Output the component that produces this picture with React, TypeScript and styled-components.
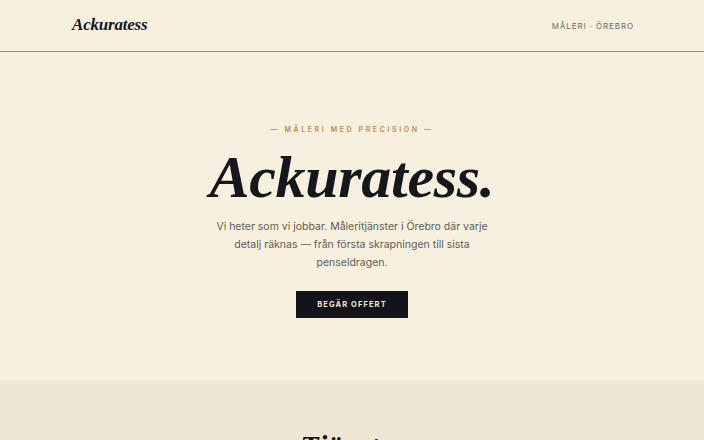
import React from 'react';
import styled, { createGlobalStyle } from 'styled-components';

const GlobalStyle = createGlobalStyle`
  html, body {
    margin: 0;
    padding: 0;
    background: #f7f0df;
  }
  body {
    font-family: Inter, 'Liberation Sans', sans-serif;
    color: #15171c;
    overflow: hidden;
  }
  * {
    box-sizing: border-box;
  }
`;

const serif = `'Liberation Serif', 'DejaVu Serif', serif`;

const Header = styled.header`
  height: 52px;
  border-bottom: 1px solid #b8833f;
  background: #f7f0df;
`;

const HeaderInner = styled.div`
  height: 100%;
  max-width: 704px;
  padding: 0 70px 0 72px;
  display: flex;
  align-items: center;
  justify-content: space-between;
`;

const Logo = styled.a`
  font-family: ${serif};
  font-style: italic;
  font-weight: 700;
  font-size: 17px;
  letter-spacing: -0.2px;
  color: #15171c;
  text-decoration: none;
  padding-bottom: 2px;
`;

const Tagline = styled.span`
  font-size: 8px;
  letter-spacing: 0.9px;
  color: #6e6a62;
  text-transform: uppercase;
`;

const Hero = styled.section`
  height: 328px;
  display: flex;
  flex-direction: column;
  align-items: center;
  padding-top: 73px;
  text-align: center;
`;

const Eyebrow = styled.p`
  margin: 0;
  font-size: 7px;
  font-weight: 600;
  letter-spacing: 2.6px;
  color: #b98a4e;
  text-transform: uppercase;
`;

const Title = styled.h1`
  margin: 8px 0 0;
  font-family: ${serif};
  font-style: italic;
  font-weight: 700;
  font-size: 60px;
  line-height: 70px;
  letter-spacing: -0.3px;
  color: #15171c;
`;

const Lead = styled.p`
  margin: 6px 0 0;
  max-width: 280px;
  font-size: 10.5px;
  line-height: 18px;
  color: #5f5c57;
`;

const Cta = styled.button`
  margin-top: 19px;
  width: 112px;
  height: 27px;
  border: none;
  background: #121419;
  color: #f3e8d2;
  font-family: Inter, 'Liberation Sans', sans-serif;
  font-size: 7.5px;
  font-weight: 700;
  letter-spacing: 1.1px;
  text-transform: uppercase;
  cursor: pointer;
`;

const Services = styled.section`
  background: #efe6d6;
  min-height: 200px;
  display: flex;
  justify-content: center;
  padding-top: 48px;
`;

const SectionTitle = styled.h2`
  margin: 0;
  font-family: ${serif};
  font-style: italic;
  font-weight: 700;
  font-size: 30px;
  line-height: 36px;
  color: #15171c;
`;

export default function App() {
  return (
    <>
      <GlobalStyle />
      <Header>
        <HeaderInner>
          <Logo href="#">Ackuratess</Logo>
          <Tagline>Måleri · Örebro</Tagline>
        </HeaderInner>
      </Header>
      <Hero>
        <Eyebrow>— Måleri med precision —</Eyebrow>
        <Title>Ackuratess.</Title>
        <Lead>
          Vi heter som vi jobbar. Måleritjänster i Örebro där varje detalj räknas — från
          första skrapningen till sista penseldragen.
        </Lead>
        <Cta>Begär offert</Cta>
      </Hero>
      <Services>
        <SectionTitle>Tjänster</SectionTitle>
      </Services>
    </>
  );
}
